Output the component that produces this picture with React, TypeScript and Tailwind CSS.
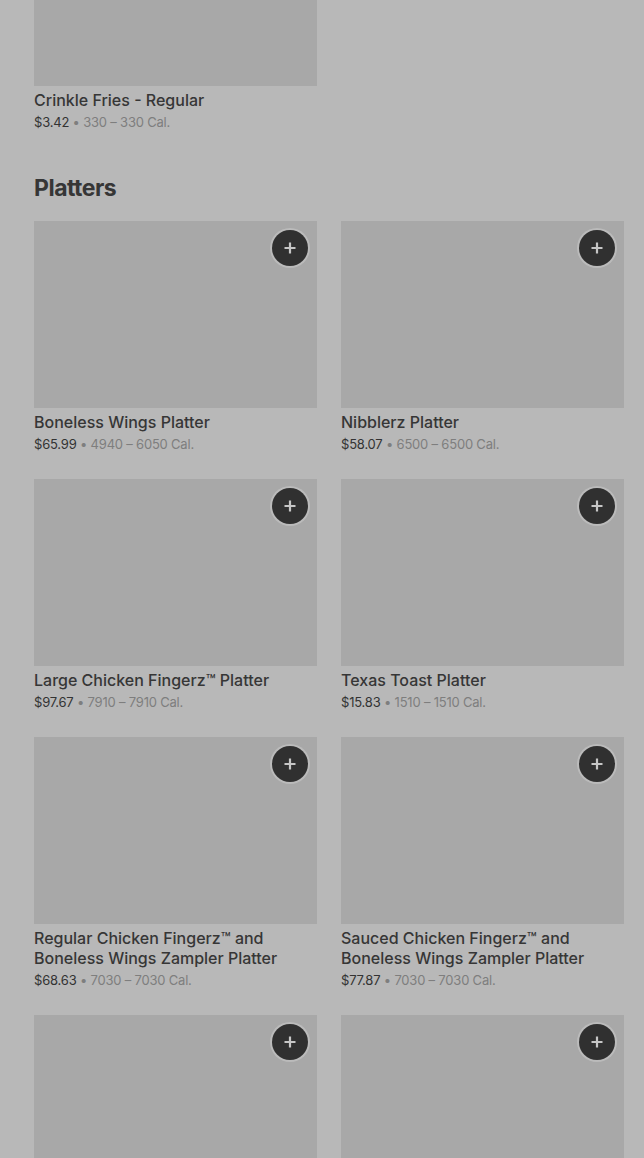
import React from 'react';

interface Item {
    name: string;
    price: string;
    cal: string;
}

const platters: Item[] = [
    { name: 'Boneless Wings Platter', price: '$65.99', cal: '4940 – 6050 Cal.' },
    { name: 'Nibblerz Platter', price: '$58.07', cal: '6500 – 6500 Cal.' },
    { name: 'Large Chicken Fingerz™ Platter', price: '$97.67', cal: '7910 – 7910 Cal.' },
    { name: 'Texas Toast Platter', price: '$15.83', cal: '1510 – 1510 Cal.' },
    { name: 'Regular Chicken Fingerz™ and Boneless Wings Zampler Platter', price: '$68.63', cal: '7030 – 7030 Cal.' },
    { name: 'Sauced Chicken Fingerz™ and Boneless Wings Zampler Platter', price: '$77.87', cal: '7030 – 7030 Cal.' },
];

const AddButton: React.FC = () => (
    <button
        type="button"
        aria-label="Add"
        className="absolute top-[9px] right-[9px] w-9 h-9 rounded-full bg-[#303030] flex items-center justify-center shadow-[0_0_0_2px_rgba(205,205,205,0.5)]"
    >
        <svg width="16" height="16" viewBox="0 0 16 16" fill="none">
            <path d="M8 2.5v11M2.5 8h11" stroke="#c6c6c6" strokeWidth="2.2" />
        </svg>
    </button>
);

const Thumb: React.FC<{ withButton?: boolean }> = ({ withButton = true }) => (
    <div className="relative h-[187px] bg-[#a8a8a8]">
        {withButton && <AddButton />}
    </div>
);

const ItemCard: React.FC<{ item: Item; withButton?: boolean }> = ({ item, withButton = true }) => (
    <div className="flex flex-col">
        <Thumb withButton={withButton} />
        <div className="pt-1 text-[16px] leading-5 font-medium text-[#363636]">{item.name}</div>
        <div className="mt-[2px] text-[13px] leading-5 tracking-[-0.2px]">
            <span className="text-[#333333]">{item.price}</span>
            <span className="text-[#7e7e7e]"> • {item.cal}</span>
        </div>
    </div>
);

export default function App() {
    return (
        <div className="h-[1158px] bg-[#b8b8b8] pl-[34px] pr-[20px] overflow-hidden" style={{ fontFamily: 'Inter, "Liberation Sans", sans-serif' }}>
            <div className="grid grid-cols-[283px_283px] gap-x-6 -mt-[101px]">
                <ItemCard item={{ name: 'Crinkle Fries - Regular', price: '$3.42', cal: '330 – 330 Cal.' }} withButton={false} />
            </div>
            <h2 className="mt-10 mb-[17px] text-[23px] leading-8 font-bold tracking-[-0.5px] text-[#363636]">Platters</h2>
            <div className="grid grid-cols-[283px_283px] gap-x-6 gap-y-[25px]">
                {platters.map((p) => (
                    <ItemCard key={p.name} item={p} />
                ))}
                <Thumb />
                <Thumb />
            </div>
        </div>
    );
}
